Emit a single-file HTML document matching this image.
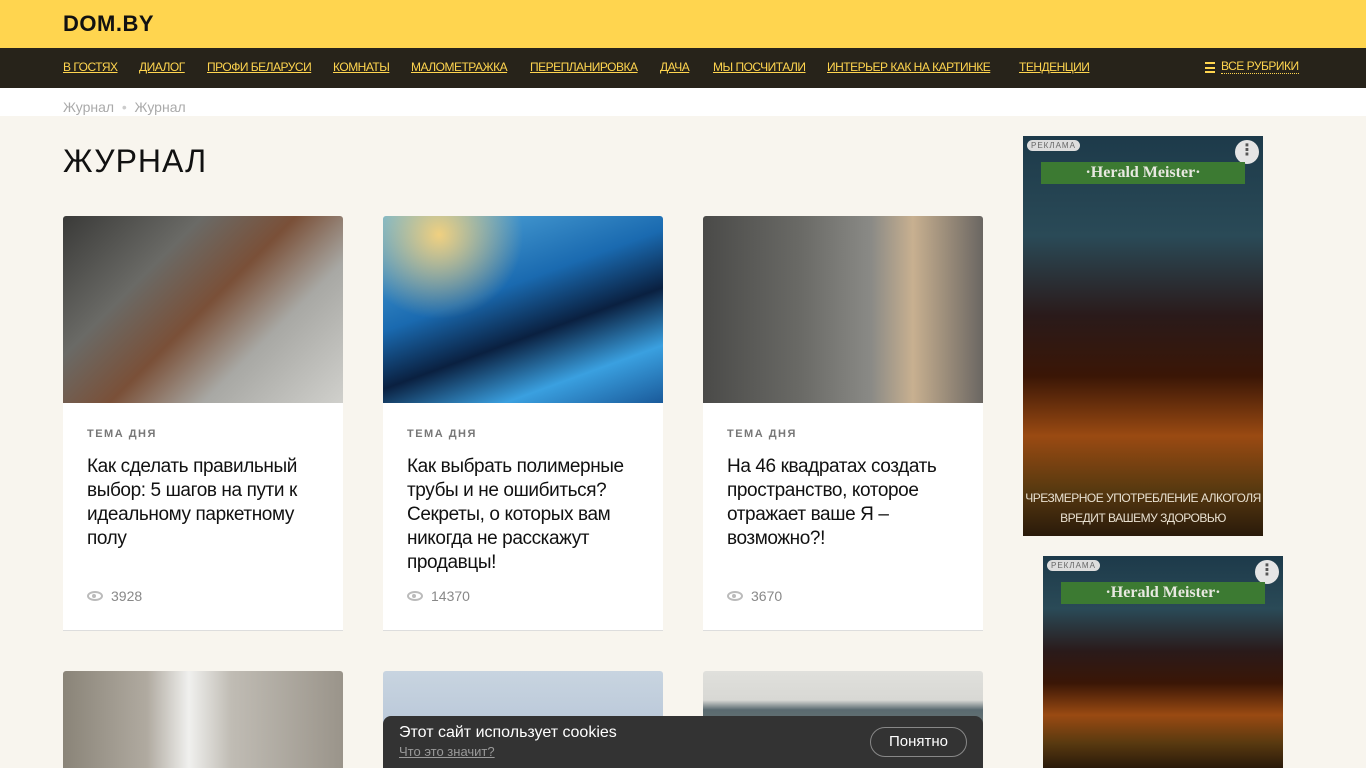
<!DOCTYPE html>
<html style="width:1366px;height:768px;overflow:hidden"><head><meta charset="utf-8"><style>
*{margin:0;padding:0;box-sizing:border-box}
body{width:1366px;height:768px;overflow:hidden;background:#f8f5ee;font-family:"Liberation Sans","DejaVu Sans",sans-serif;position:relative}
.top{height:48px;background:#ffd54f;position:relative}
.logo{position:absolute;left:63px;top:11px;font-weight:bold;font-size:22px;letter-spacing:0.5px;color:#111}
.nav{height:40px;background:#27231a;position:relative}
.nav a{position:absolute;top:12px;font-size:12px;color:#ffd54f;text-decoration:underline;letter-spacing:-0.5px;transform-origin:left;}
.bc{height:28px;background:#fff;font-size:14px;color:#aaa;padding:12px 0 0 63px;line-height:14px}
h1{position:absolute;left:63px;top:143px;font-size:32px;font-weight:normal;letter-spacing:1px;color:#111}
.card{position:absolute;top:216px;width:280px;height:415px;background:#fff;border-bottom:1px solid #ddd;border-radius:3px 3px 0 0;overflow:hidden}
.img{height:187px}
.tag{position:absolute;left:24px;top:212px;font-size:11px;font-weight:bold;letter-spacing:1.5px;color:#777}
.tt{position:absolute;left:24px;top:239px;width:235px;font-size:19px;line-height:24px;color:#111;letter-spacing:-0.4px}
.v{position:absolute;left:24px;top:372px;font-size:14px;color:#888}
.v i{display:inline-block;width:16px;height:10px;border:2px solid #bbb;border-radius:50%;margin-right:8px;vertical-align:0;position:relative}
.v i:after{content:"";position:absolute;left:3px;top:1px;width:4px;height:4px;border-radius:50%;background:#bbb}
.card2{position:absolute;top:671px;width:280px;height:97px;overflow:hidden;border-radius:3px 3px 0 0}
.ad{position:absolute;width:240px;height:400px;overflow:hidden;background:linear-gradient(#1d3a4a 0%,#2a4a57 25%,#2a1a1a 45%,#3a1606 60%,#9a4a12 75%,#5a3a10 88%,#2a1a0a 100%)}
.ad .b{position:absolute;left:18px;top:26px;width:204px;height:22px;background:#3c7a32;color:#e8e8e0;font:bold 16px "Liberation Serif",serif;text-align:center;line-height:22px}
.ad .r{position:absolute;left:4px;top:4px;background:#ddd;border-radius:6px;font-size:8px;letter-spacing:1px;color:#666;padding:1px 4px}
.ad .d{position:absolute;right:4px;top:4px;width:24px;height:24px;border-radius:50%;background:#e5e5e5;color:#555;text-align:center;font-size:16px;line-height:22px;font-weight:bold}
.ck{position:absolute;left:383px;top:716px;width:600px;height:52px;background:#333;border-radius:8px 8px 0 0;color:#fff}
</style></head><body>
<div class="top"><div class="logo">DOM.BY</div></div>
<div class="nav">
<a style="left:63px">В ГОСТЯХ</a><a style="left:139px">ДИАЛОГ</a><a style="left:207px">ПРОФИ БЕЛАРУСИ</a><a style="left:333px">КОМНАТЫ</a><a style="left:411px">МАЛОМЕТРАЖКА</a><a style="left:530px">ПЕРЕПЛАНИРОВКА</a><a style="left:660px">ДАЧА</a><a style="left:713px">МЫ ПОСЧИТАЛИ</a><a style="left:827px">ИНТЕРЬЕР КАК НА КАРТИНКЕ</a><a style="left:1019px">ТЕНДЕНЦИИ</a>
<span style="position:absolute;left:1205px;top:14px;width:10px;height:11px;border-top:2px solid #ffd54f;border-bottom:2px solid #ffd54f"><span style="position:absolute;top:3px;left:0;width:10px;height:2px;background:#ffd54f"></span></span>
<a style="left:1221px;text-decoration:none;border-bottom:1px dotted #ffd54f;line-height:13px">ВСЕ РУБРИКИ</a>
</div>
<div class="bc">Журнал &nbsp;<span style="color:#ccc">•</span>&nbsp; Журнал</div>
<h1>ЖУРНАЛ</h1>
<div class="card" style="left:63px"><div class="img" style="background:linear-gradient(135deg,#3a3a38 0%,#6a6a66 30%,#7a5038 50%,#a8a8a4 70%,#d0d0cc 100%)"></div>
<div class="tag">ТЕМА ДНЯ</div><div class="tt">Как сделать правильный выбор: 5 шагов на пути к идеальному паркетному полу</div><div class="v"><i></i>3928</div></div>
<div class="card" style="left:383px"><div class="img" style="background:radial-gradient(circle at 20% 10%,#f0d080 0%,transparent 30%),linear-gradient(160deg,#5ab0e0 0%,#1a6ab0 40%,#0a2040 60%,#3aa0e0 80%,#1a5a9a 100%)"></div>
<div class="tag">ТЕМА ДНЯ</div><div class="tt">Как выбрать полимерные трубы и не ошибиться? Секреты, о которых вам никогда не расскажут продавцы!</div><div class="v"><i></i>14370</div></div>
<div class="card" style="left:703px"><div class="img" style="background:linear-gradient(90deg,#4a4a48 0%,#6a6a66 35%,#8a8a86 60%,#c8b090 75%,#6a6662 100%)"></div>
<div class="tag">ТЕМА ДНЯ</div><div class="tt">На 46 квадратах создать пространство, которое отражает ваше Я – возможно?!</div><div class="v"><i></i>3670</div></div>
<div class="card2" style="left:63px;background:linear-gradient(90deg,#8a8478 0%,#b0aaa0 30%,#f0f0ee 45%,#c0bcb4 60%,#9a948a 100%)"></div>
<div class="card2" style="left:383px;background:linear-gradient(#c8d4e0,#b0c0d4)"></div>
<div class="card2" style="left:703px;background:linear-gradient(#e0e0dc 0%,#d8d8d4 30%,#5a6a70 40%,#8a8a7a 100%)"></div>
<div class="ad" style="left:1023px;top:136px"><div class="r">РЕКЛАМА</div><div class="d">⋮</div><div class="b">·Herald Meister·</div>
<div style="position:absolute;left:0;top:352px;width:240px;color:#e8e0d0;font-size:12px;line-height:20px;text-align:center;letter-spacing:-0.5px;white-space:nowrap">ЧРЕЗМЕРНОЕ УПОТРЕБЛЕНИЕ АЛКОГОЛЯ<br>ВРЕДИТ ВАШЕМУ ЗДОРОВЬЮ</div></div>
<div class="ad" style="left:1043px;top:556px;height:212px"><div class="r">РЕКЛАМА</div><div class="d">⋮</div><div class="b">·Herald Meister·</div></div>
<div class="ck"><div style="position:absolute;left:16px;top:8px;font-size:16px">Этот сайт использует cookies</div>
<div style="position:absolute;left:16px;top:28px;font-size:13px;color:#999;text-decoration:underline">Что это значит?</div>
<div style="position:absolute;left:487px;top:11px;width:97px;height:30px;border:1px solid #888;border-radius:15px;text-align:center;line-height:28px;font-size:15px">Понятно</div></div>
</body></html>
